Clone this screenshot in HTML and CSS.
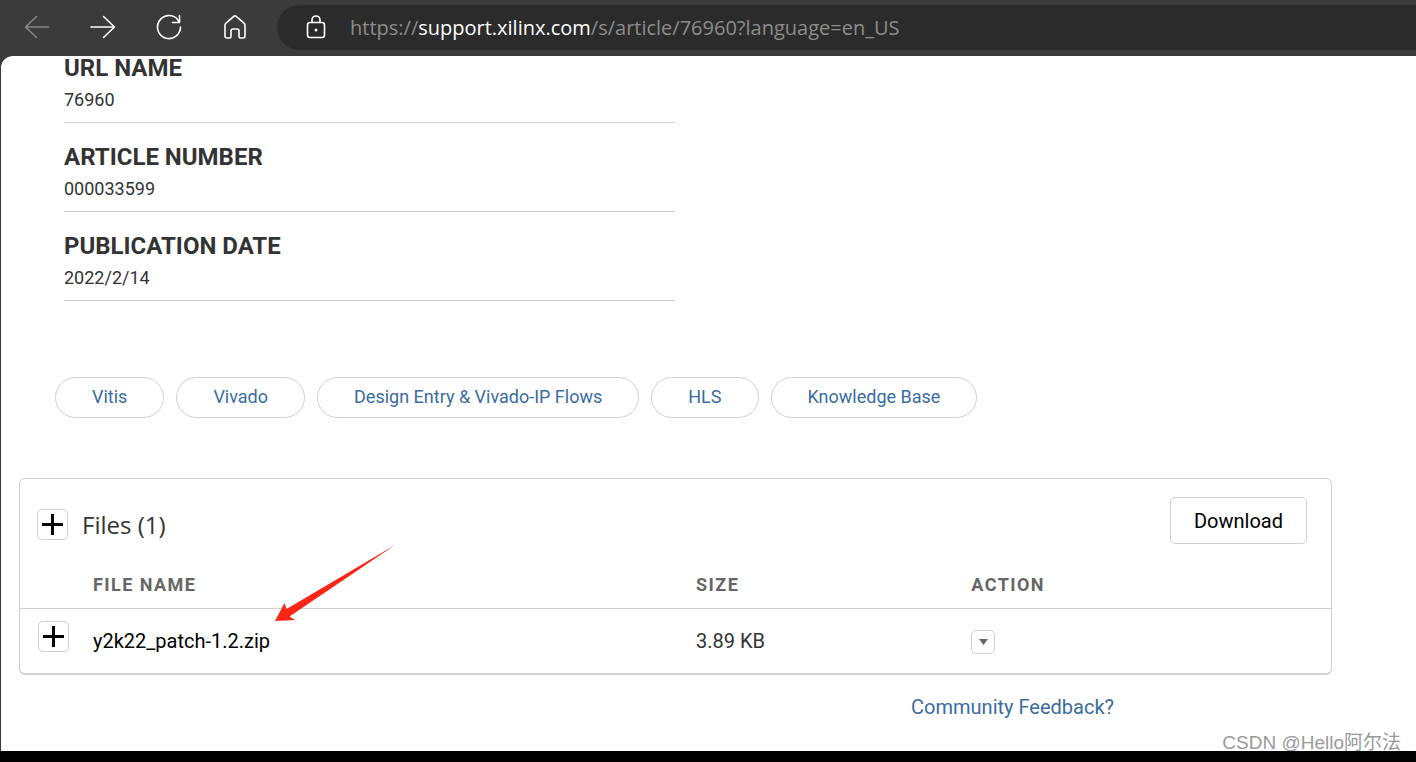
FILE: index.html
```html
<!DOCTYPE html>
<html lang="en">
<head>
<meta charset="utf-8">
<title>Article 76960</title>
<link rel="stylesheet" href="styles.css">
</head>
<body>
<header class="toolbar">
  <nav class="nav" aria-label="Browser">
    <button class="nav-btn nav-btn-off" aria-label="Back" disabled>
      <svg viewBox="0 0 26 26"><path d="M24.500 13H1.500M12.500 2.500L1.500 13L12.500 23.500"/></svg>
    </button>
    <button class="nav-btn" aria-label="Forward">
      <svg viewBox="0 0 26 26"><path d="M1 13H24.500M13.500 2.500L24.500 13L13.500 23.500"/></svg>
    </button>
    <button class="nav-btn" aria-label="Refresh">
      <svg viewBox="0 0 26 26"><path d="M24.500 13A11.500 11.500 0 1 1 21.200 5L23 7.500M23.500 1.500V8.500H16.500"/></svg>
    </button>
    <button class="nav-btn" aria-label="Home">
      <svg viewBox="0 0 26 26"><path d="M3 11.300Q3 10 4 9.200L11.800 2.300Q13 1.400 14.200 2.300L22 9.200Q23 10 23 11.300V22Q23 24 21 24H18.500Q17 24 17 22.500V17Q17 15 15 15H11Q9 15 9 17V22.500Q9 24 7.500 24H5Q3 24 3 22Z"/></svg>
    </button>
  </nav>
  <div class="address">
    <svg class="lock" viewBox="0 0 20 24"><rect x="1.500" y="7.500" width="17" height="15" rx="2.500"/><path d="M6 7.500V5a4 4 0 0 1 8 0V7.500"/><circle cx="10" cy="15" r="1.500"/></svg>
    <div class="url" role="textbox" aria-label="Address" contenteditable="true" spellcheck="false">https://<span class="url-host">support.xilinx.com</span>/s/article/76960?language=en_US</div>
  </div>
</header>

<main class="page">
  <dl class="info">
    <div class="field"><dt>URL NAME</dt><dd>76960</dd></div>
    <div class="field"><dt>ARTICLE NUMBER</dt><dd>000033599</dd></div>
    <div class="field"><dt>PUBLICATION DATE</dt><dd>2022/2/14</dd></div>
  </dl>

  <nav class="tags" aria-label="Topics">
    <a class="tag" href="#">Vitis</a>
    <a class="tag" href="#">Vivado</a>
    <a class="tag" href="#">Design Entry &amp; Vivado-IP Flows</a>
    <a class="tag" href="#">HLS</a>
    <a class="tag" href="#">Knowledge Base</a>
  </nav>

  <section class="files">
    <div class="files-head">
      <button class="plus" aria-label="Add all files"><svg viewBox="0 0 21 21"><path d="M10.500 0V21M0 10.500H21"/></svg></button>
      <h2>Files (1)</h2>
      <button class="download">Download</button>
    </div>
    <table>
      <colgroup><col class="col-add"><col class="col-name"><col class="col-size"><col></colgroup>
      <thead>
        <tr><td></td><th scope="col">FILE NAME</th><th scope="col">SIZE</th><th scope="col">ACTION</th></tr>
      </thead>
      <tbody>
        <tr>
          <td class="cell-add"><button class="plus" aria-label="Add file"><svg viewBox="0 0 21 21"><path d="M10.500 0V21M0 10.500H21"/></svg></button></td>
          <td><a class="file-link" href="#">y2k22_patch-1.2.zip</a></td>
          <td>3.89 KB</td>
          <td class="cell-menu"><button class="menu" aria-label="Show actions"><svg viewBox="0 0 9 6"><path d="M0 0H9L4.500 6Z"/></svg></button></td>
        </tr>
      </tbody>
    </table>
    <svg class="pointer" viewBox="0 0 120 76" aria-hidden="true"><path d="M0 76L9.500 58L11.500 64L120 0L14.500 71.500L20 75Z"/></svg>
  </section>

  <a class="feedback" href="#">Community Feedback?</a>
</main>

<footer class="bottom"><span class="credit">CSDN @Hello阿尔法</span></footer>
</body>
</html>
```
FILE: styles.css
```css
* {
  box-sizing: border-box;
}

body {
  margin: 0;
  min-height: 100vh;
  display: flex;
  flex-direction: column;
  background: #3b3b3b;
  color: #333;
  font-family: Roboto, "Liberation Sans", sans-serif;
  font-size: 20px;
}

button {
  font: inherit;
  padding: 0;
  cursor: pointer;
}

a {
  color: #3a6c9f;
  text-decoration: none;
}

/* Browser toolbar */
.toolbar {
  display: flex;
  align-items: center;
  height: 56px;
  padding: 0 0 2px 24px;
}

.nav {
  display: flex;
  gap: 40px;
}

.nav-btn {
  width: 26px;
  height: 26px;
  border: 0;
  background: none;
  color: #fff;
}

.nav-btn-off {
  color: #858585;
}

.nav-btn svg,
.lock {
  display: block;
  fill: none;
  stroke: currentColor;
  stroke-width: 1.6;
  stroke-linecap: round;
  stroke-linejoin: round;
}

.address {
  flex: 1;
  display: flex;
  align-items: center;
  gap: 24px;
  height: 45px;
  margin-left: 29px;
  padding-left: 29px;
  border-radius: 23px 0 0 23px;
  background: #2b2b2b;
  color: #fff;
}

.lock {
  width: 20px;
  height: 24px;
}

.lock circle {
  fill: currentColor;
  stroke: none;
}

.url {
  color: #8c8c8c;
  font-family: "Open Sans", "Noto Sans", sans-serif;
  white-space: nowrap;
  outline: 0;
}

.url-host {
  color: #fff;
}

/* Article */
.page {
  flex: 1;
  margin-left: 1px;
  padding-right: 84px;
  border-top-left-radius: 12px;
  background: #fff;
}

.info {
  width: calc(50% + 8px);
  margin: 0;
  padding-left: 63px;
}

.field {
  margin-bottom: 22px;
  padding-bottom: 10px;
  border-bottom: 1px solid #d0d0d0;
}

.field dt {
  font-size: 24px;
  font-weight: 700;
  line-height: 24px;
}

.field dd {
  margin: 8px 0 0;
  font-size: 18px;
  line-height: 24px;
}

.tags {
  display: flex;
  flex-wrap: wrap;
  gap: 12px;
  margin: 76px 0 60px 54px;
}

.tag {
  padding: 0 36px 2px;
  border: 1px solid #d0d0d0;
  border-radius: 21px;
  font-size: 18px;
  line-height: 37px;
}

/* Files card */
.files {
  position: relative;
  margin-left: 18px;
  border: 1px solid #d0d0d0;
  border-bottom-width: 2px;
  border-radius: 6px;
}

.files-head {
  display: flex;
  align-items: center;
  gap: 14px;
  padding: 18px 24px 0 17px;
}

.files-head h2 {
  flex: 1;
  margin: 0;
  font-family: "Open Sans", "Noto Sans", sans-serif;
  font-size: 24px;
  font-weight: 400;
  line-height: 31px;
}

.plus {
  display: grid;
  place-items: center;
  width: 31px;
  height: 31px;
  border: 1px solid #d0d0d0;
  border-radius: 5px;
  background: #fff;
}

.files-head .plus,
.files-head h2 {
  margin-top: 8px;
}

.plus svg {
  width: 21px;
  height: 21px;
  stroke: #000;
  stroke-width: 3;
}

.download {
  width: 137px;
  height: 47px;
  border: 1px solid #d0d0d0;
  border-radius: 5px;
  background: #fff;
  color: #000;
}

table {
  width: 100%;
  table-layout: fixed;
  border-collapse: collapse;
}

.col-add {
  width: 73px;
}

.col-name {
  width: 46%;
}

.col-size {
  width: 21%;
}

th,
td {
  padding: 0;
  text-align: left;
}

thead tr {
  height: 64px;
  border-bottom: 1px solid #d0d0d0;
}

th {
  padding-top: 18px;
  color: #666;
  font-size: 18px;
  letter-spacing: 0.08em;
}

tbody tr {
  height: 65px;
}

.cell-add {
  padding: 0 0 8px 18px;
}

.cell-menu {
  padding-top: 2px;
}

.file-link {
  color: #000;
}

.menu {
  display: grid;
  place-items: center;
  width: 24px;
  height: 24px;
  border: 1px solid #d0d0d0;
  border-radius: 5px;
  background: #fff;
}

.menu svg {
  width: 9px;
  height: 6px;
  fill: #666;
}

.pointer {
  position: absolute;
  left: 255px;
  top: 66px;
  width: 120px;
  height: 76px;
  fill: #fc2517;
}

.feedback {
  display: block;
  width: fit-content;
  margin: 20px 0 0 auto;
  padding-right: 218px;
  line-height: 24px;
}

/* Bottom strip */
.bottom {
  position: relative;
  height: 11px;
  background: #000;
}

.credit {
  position: absolute;
  right: 15px;
  bottom: 5px;
  color: #999;
  font-family: "Liberation Sans", "Noto Sans CJK SC", sans-serif;
  font-size: 19px;
  line-height: 28px;
  text-shadow: -1px -1px 0 #fff;
}
```
